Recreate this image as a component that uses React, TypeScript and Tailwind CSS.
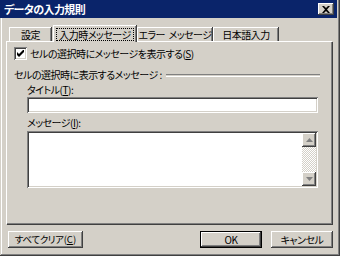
import { useState } from "react";
import type { ReactNode } from "react";

const FONT = "font-['Noto_Sans_CJK_JP','Liberation_Sans',sans-serif] [font-feature-settings:'palt']";

const RAISED =
  "shadow-[inset_-1px_-1px_#404040,inset_1px_1px_#ffffff,inset_-2px_-2px_#808080,inset_2px_2px_#d4d0c8]";
const SUNKEN =
  "shadow-[inset_1px_1px_#808080,inset_-1px_-1px_#ffffff,inset_2px_2px_#404040,inset_-2px_-2px_#d4d0c8]";

function Tab({ label, active, className }: { label: string; active?: boolean; className?: string }) {
  if (active) {
    return (
      <div
        className={
          "relative z-10 mb-[-1px] flex h-[17px] items-center justify-center border-l border-t border-white bg-[#d4d0c8] shadow-[inset_-1px_0_#808080,1px_0_#404040] " +
          (className ?? "")
        }
      >
        <span className="border border-dotted border-black px-[2px] leading-[11px]">{label}</span>
      </div>
    );
  }
  return (
    <div
      className={
        "flex h-[14px] items-center justify-center whitespace-pre border-l border-t border-white shadow-[inset_-1px_0_#808080,1px_0_#404040] " +
        (className ?? "")
      }
    >
      {label}
    </div>
  );
}

function Button({ children, def, className }: { children: ReactNode; def?: boolean; className?: string }) {
  return (
    <div
      className={
        "flex h-[17px] items-center justify-center whitespace-nowrap bg-[#d4d0c8] " +
        (def
          ? "border border-black shadow-[inset_-1px_-1px_#404040,inset_1px_1px_#ffffff,inset_-2px_-2px_#808080] "
          : RAISED + " ") +
        (className ?? "")
      }
    >
      {children}
    </div>
  );
}

export default function App() {
  const [checked, setChecked] = useState(true);

  return (
    <div
      className={`${FONT} relative flex h-[256px] w-[340px] flex-col bg-[#d4d0c8] text-[10px] leading-[11px] tracking-[-0.5px] text-black shadow-[inset_-1px_-1px_#404040,inset_1px_0_#d4d0c8,inset_-2px_-2px_#808080,inset_2px_0_#ffffff]`}
    >
      {/* title bar */}
      <div className="mr-[3px] flex h-[18px] items-center justify-between bg-[#0a246a] pl-[4px] pr-[3px]">
        <span className="text-[11px] font-bold tracking-[-0.6px] text-white">データの入力規則</span>
        <div className={`flex h-[12px] w-[16px] items-center justify-center bg-[#d4d0c8] ${RAISED}`}>
          <svg width="8" height="7" viewBox="0 0 8 7">
            <path d="M0 0h2l2 2 2-2h2L5 3.5 8 7H6L4 5 2 7H0l3-3.5z" fill="#000" />
          </svg>
        </div>
      </div>

      {/* tabs */}
      <div className="ml-[9px] mt-[7px] flex items-end">
        <Tab label="設定" className="w-[42px]" />
        <Tab label="入力時メッセージ" active className="ml-[2px] w-[83px]" />
        <Tab label="エラー  メッセージ" className="ml-[1px] w-[75px]" />
        <Tab label="日本語入力" className="ml-[1px] w-[65px]" />
      </div>

      {/* panel */}
      <div className="ml-[6px] mr-[8px] flex h-[183px] flex-col border-l border-t border-white shadow-[inset_-1px_-1px_#808080,1px_1px_#404040]">
        <label className="ml-[7px] mt-[5px] flex h-[13px] items-center gap-[3px]">
          <span
            onClick={() => setChecked(!checked)}
            className={`flex h-[13px] w-[13px] items-center justify-center bg-white ${SUNKEN}`}
          >
            {checked && (
              <svg width="7" height="7" viewBox="0 0 7 7">
                <path d="M0 2v3l2 2 5-5V-1L2 4z" fill="#000" />
              </svg>
            )}
          </span>
          <span>
            セルの選択時にメッセージを表示する(<u>S</u>)
          </span>
        </label>

        <div className="ml-[7px] mr-[12px] mt-[9px] flex h-[11px] items-center gap-[4px]">
          <span>セルの選択時に表示するメッセージ :</span>
          <div className="h-[2px] flex-1 border-t border-[#808080] shadow-[0_1px_#ffffff]" />
        </div>

        <div className="ml-[20px] mt-[4px] h-[11px]">
          タイトル(<u>T</u>):
        </div>
        <div className={`ml-[20px] mt-[2px] h-[16px] w-[291px] bg-white ${SUNKEN}`} />

        <div className="ml-[20px] mt-[4px] h-[11px]">
          メッセージ(<u>I</u>):
        </div>
        <div className={`ml-[20px] mt-[3px] flex h-[57px] w-[291px] bg-white p-[2px] ${SUNKEN}`}>
          <div className="flex-1" />
          <div className="flex w-[14px] flex-col bg-[repeating-conic-gradient(#ffffff_0_25%,#d4d0c8_0_50%)] bg-[length:2px_2px]">
            <div className={`flex h-[14px] items-center justify-center bg-[#d4d0c8] ${RAISED}`}>
              <svg width="7" height="4" viewBox="0 0 7 4">
                <path d="M3.5 0L7 4H0z" fill="#808080" />
              </svg>
            </div>
            <div className="flex-1" />
            <div className={`flex h-[14px] items-center justify-center bg-[#d4d0c8] ${RAISED}`}>
              <svg width="7" height="4" viewBox="0 0 7 4">
                <path d="M0 0h7L3.5 4z" fill="#808080" />
              </svg>
            </div>
          </div>
        </div>
      </div>

      {/* buttons */}
      <div className="ml-[8px] mr-[7px] mt-[7px] flex items-center">
        <Button className="w-[75px] text-[9.5px] tracking-[-0.4px]">
          すべてクリア<span className="tracking-normal">(<u>C</u>)</span>
        </Button>
        <div className="flex-1" />
        <Button def className="w-[62px]">
          OK
        </Button>
        <Button className="ml-[9px] w-[62px]">キャンセル</Button>
      </div>
    </div>
  );
}
